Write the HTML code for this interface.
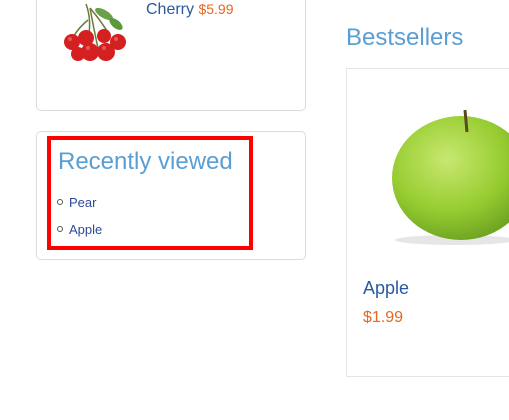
<!DOCTYPE html>
<html><head><meta charset="utf-8"><style>
body{margin:0;width:509px;height:420px;background:#fff;position:relative;overflow:hidden;font-family:"Liberation Sans",sans-serif}
.box{position:absolute;border:1px solid #dcdcdc;border-radius:5px;background:#fff}
.abs{position:absolute;white-space:nowrap}
</style></head><body>
<div class="box" style="left:36px;top:-10px;width:268px;height:119px"></div>
<svg class="abs" style="left:58px;top:0" width="82" height="72" viewBox="0 0 82 72">
<path d="M28 4 Q34 20 30 40 M32 8 Q44 22 52 36 M32 8 Q36 30 40 48 M30 20 Q18 30 14 40" stroke="#6a7a3a" stroke-width="1.5" fill="none"/>
<ellipse cx="46" cy="14" rx="10" ry="4" fill="#6aa04a" transform="rotate(30 46 14)"/>
<ellipse cx="58" cy="24" rx="8" ry="4" fill="#5a9a3a" transform="rotate(40 58 24)"/>
<g fill="#d42020"><circle cx="14" cy="42" r="8"/><circle cx="28" cy="38" r="8"/><circle cx="46" cy="36" r="7"/><circle cx="60" cy="42" r="8"/><circle cx="32" cy="52" r="9"/><circle cx="48" cy="52" r="9"/><circle cx="20" cy="54" r="7"/></g>
<g fill="#f08080" opacity=".6"><circle cx="30" cy="48" r="2"/><circle cx="46" cy="48" r="2"/><circle cx="12" cy="39" r="2"/><circle cx="58" cy="39" r="2"/></g>
</svg>
<div class="abs" style="left:146px;top:1px;font-size:16px;color:#2a5aa0">Cherry <span style="color:#e8661f;font-size:14px">$5.99</span></div>

<div class="box" style="left:36px;top:131px;width:268px;height:127px"></div>
<div class="abs" style="left:47px;top:136px;width:198px;height:106px;border:4px solid #f00"></div>
<div class="abs" style="left:58px;top:148px;font-size:24px;color:#5a9fd4">Recently viewed</div>
<div class="abs" style="left:57px;top:189px;font-size:13px;color:#2a4a9a;line-height:27px">
<div><span style="display:inline-block;width:4px;height:4px;border:1px solid #555;border-radius:50%;margin-right:6px;vertical-align:2px"></span>Pear</div>
<div><span style="display:inline-block;width:4px;height:4px;border:1px solid #555;border-radius:50%;margin-right:6px;vertical-align:2px"></span>Apple</div>
</div>

<div class="abs" style="left:346px;top:24px;font-size:24px;color:#5a9fd4">Bestsellers</div>
<div class="abs" style="left:346px;top:68px;width:170px;height:307px;border:1px solid #e6e6e6"></div>
<svg class="abs" style="left:375px;top:100px" width="134" height="150" viewBox="0 0 134 150">
<defs><radialGradient id="g" cx=".4" cy=".35" r=".7"><stop offset="0" stop-color="#c8e870"/><stop offset=".6" stop-color="#96cc30"/><stop offset="1" stop-color="#6aa020"/></radialGradient></defs>
<ellipse cx="80" cy="140" rx="60" ry="5" fill="#e6e6e6"/>
<ellipse cx="86" cy="78" rx="69" ry="62" fill="url(#g)"/>
<path d="M92 32 L90 10" stroke="#5a4a20" stroke-width="3"/>
</svg>
<div class="abs" style="left:363px;top:278px;font-size:18px;color:#2a5aa0">Apple</div>
<div class="abs" style="left:363px;top:309px;font-size:16px;color:#e8661f">$1.99</div>
</body></html>
